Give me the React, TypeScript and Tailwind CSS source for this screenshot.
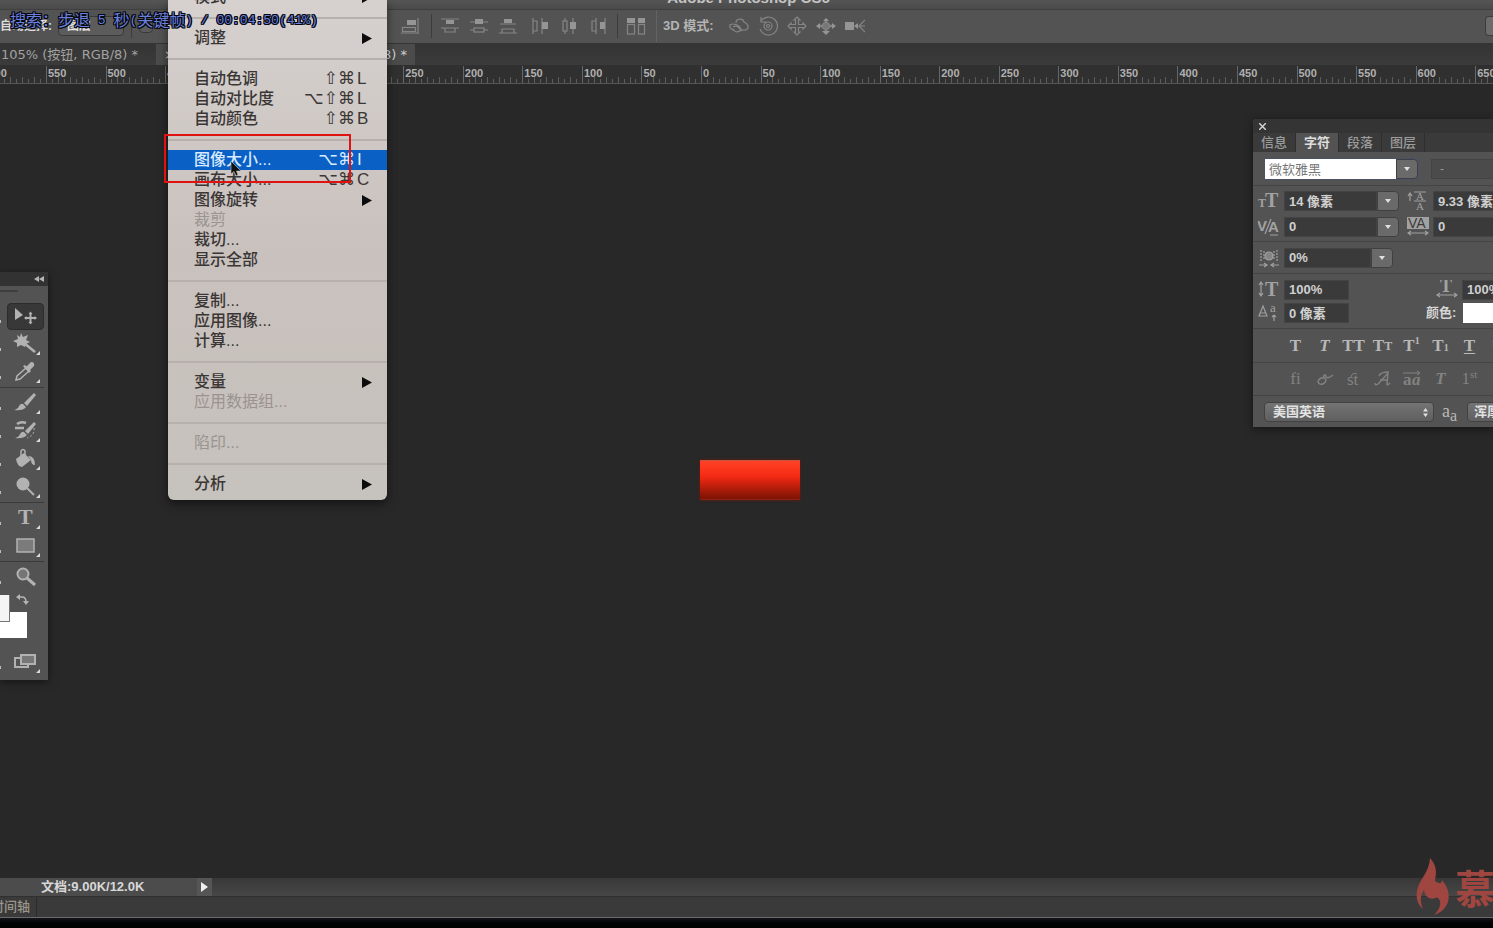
import React from "react";

const sans = "font-['Liberation_Sans','Noto_Sans_CJK_SC',sans-serif]";

type Item = { label: string; keys?: [string, string]; sub?: boolean; off?: boolean; on?: boolean };

const menuGroups: Item[][] = [
  [{ label: "模式", sub: true }],
  [{ label: "调整", sub: true }],
  [
    { label: "自动色调", keys: ["⇧⌘", "L"] },
    { label: "自动对比度", keys: ["⌥⇧⌘", "L"] },
    { label: "自动颜色", keys: ["⇧⌘", "B"] },
  ],
  [
    { label: "图像大小...", keys: ["⌥⌘", "I"], on: true },
    { label: "画布大小...", keys: ["⌥⌘", "C"] },
    { label: "图像旋转", sub: true },
    { label: "裁剪", off: true },
    { label: "裁切..." },
    { label: "显示全部" },
  ],
  [{ label: "复制..." }, { label: "应用图像..." }, { label: "计算..." }],
  [{ label: "变量", sub: true }, { label: "应用数据组...", off: true }],
  [{ label: "陷印...", off: true }],
  [{ label: "分析", sub: true }],
];

function Menu() {
  return (
    <div
      role="menu"
      aria-label="图像"
      className="absolute top-0 left-[168px] z-20 flex h-[500px] w-[219px] flex-col justify-end overflow-hidden rounded-b-md bg-linear-to-b from-[#d6d1cf] via-[#c9c1bd] to-[#c6c2bd] pb-1.5 shadow-[0_4px_10px_rgba(0,0,0,0.5)]"
    >
      {menuGroups.map((group, i) => (
        <div key={i} role="group" className="shrink-0">
          {i > 0 && (
            <div role="separator" className="flex h-[21px] items-center">
              <div className="h-0.5 w-full bg-[#b7b0ad]" />
            </div>
          )}
          {group.map((it) => (
            <button
              key={it.label}
              role="menuitem"
              disabled={it.off}
              className={`flex h-5 w-full items-center pr-[15px] pl-[26px] text-left text-base leading-5 ${
                it.on ? "bg-[#0b60c6] font-medium text-[#d9ecff]" : it.off ? "text-[#9a9390]" : "font-medium text-[#3a3635]"
              }`}
            >
              <span className="grow">{it.label}</span>
              {it.keys && (
                <span className="flex items-center font-['Liberation_Sans','DejaVu_Sans',sans-serif] text-[17px]">
                  <span>{it.keys[0]}</span>
                  <span className="w-[17px] pl-0.5">{it.keys[1]}</span>
                </span>
              )}
              {it.sub && (
                <svg width="10" height="11" viewBox="0 0 10 11" fill="#0c0c0c">
                  <path d="M0 0L10 5.5L0 11Z" />
                </svg>
              )}
            </button>
          ))}
        </div>
      ))}
    </div>
  );
}

function BarIcon({ label, children }: { label: string; children: React.ReactNode }) {
  return (
    <button aria-label={label} className="h-5 w-5 shrink-0">
      <svg width="20" height="20" viewBox="0 0 20 20" fill="none" stroke="#858585" strokeWidth="1.2">
        {children}
      </svg>
    </button>
  );
}

const f = { fill: "#959595", stroke: "none" };

function BarDivider() {
  return <div className="h-6 w-px shrink-0 bg-[#3c3c3c]" />;
}

function OptionsBar() {
  return (
    <div className="flex h-[34px] shrink-0 items-center border-t border-[#3f3f3f] bg-[#535353] pb-0.5">
      <div className="flex w-[400px] shrink-0 items-center">
        <label htmlFor="auto" className="w-[58px] overflow-hidden text-xs font-bold whitespace-nowrap text-[#dcdcdc]">
          自动选择:
        </label>
        <select
          id="auto"
          className="h-5 w-[66px] appearance-none rounded-sm border border-[#3a3a3a] bg-[#5c5c5c] pl-2 text-xs font-bold text-[#e0e0e0]"
        >
          <option>图层</option>
        </select>
        <div className="mx-[7px] h-6 w-px bg-[#3c3c3c]" />
        <input type="checkbox" aria-label="显示变换控件" className="h-3.5 w-3.5 appearance-none rounded-sm border border-[#3a3a3a] bg-[#5c5c5c]" />
      </div>
      <BarIcon label="右对齐">
        <path d="M18 2V18M1 17H18" />
        <rect x="7" y="4" width="9" height="5" {...f} />
        <rect x="2.5" y="11.5" width="13" height="4" />
      </BarIcon>
      <div className="w-[11px] shrink-0" />
      <BarDivider />
      <div className="flex gap-[9px] pl-2">
        <BarIcon label="按顶分布">
          <path d="M1 3H19M1 12H19M5 12V16H15V12" />
          <rect x="6" y="4" width="8" height="4" {...f} />
        </BarIcon>
        <BarIcon label="垂直居中分布">
          <path d="M1 6H19M1 14H5M15 14H19" />
          <rect x="6" y="3" width="8" height="5" {...f} />
          <rect x="5" y="12" width="10" height="4" />
        </BarIcon>
        <BarIcon label="按底分布">
          <path d="M2 8H18M1 17H19M4 17V13H16V17" />
          <rect x="6" y="3" width="8" height="4" {...f} />
        </BarIcon>
      </div>
      <div className="flex gap-[9px] pl-3">
        <BarIcon label="按左分布">
          <path d="M3 2V18M3 5H7V15H3M12 2V18" />
          <rect x="12" y="6" width="6" height="7" {...f} />
        </BarIcon>
        <BarIcon label="水平居中分布">
          <path d="M6 2V5M6 15V18M14 2V18" />
          <rect x="4" y="5" width="4" height="10" />
          <rect x="11" y="6" width="6" height="7" {...f} />
        </BarIcon>
        <BarIcon label="按右分布">
          <path d="M8 2V18M8 5H4V15H8M17 2V18" />
          <rect x="12" y="6" width="5" height="7" {...f} />
        </BarIcon>
      </div>
      <div className="w-[9px] shrink-0" />
      <BarDivider />
      <div className="w-2 shrink-0" />
      <BarIcon label="自动对齐图层">
        <rect x="1.5" y="8.5" width="7" height="9.5" />
        <rect x="12.5" y="8.5" width="6" height="9.5" />
        <rect x="1" y="2" width="8" height="5" {...f} />
        <rect x="12" y="2" width="7" height="5" {...f} />
      </BarIcon>
      <div className="w-2.5 shrink-0" />
      <div className="h-8 w-px shrink-0 bg-[#636363]" />
      <span className="w-[72px] shrink-0 pl-1.5 text-[13px] leading-5 font-bold whitespace-nowrap text-[#b4b4b4]">3D 模式:</span>
      <div className="flex gap-[9px]">
        <BarIcon label="旋转 3D 对象">
          <path d="M5 14C0 13 -1 8 4 8C7 8 9 9 11 11M7 7C7 2 14 2 15 6C21 9 20 14 15 14H12M9 11L13 15M4 11C7 9 12 11 12 14C9 17 5 16 4 13" />
        </BarIcon>
        <BarIcon label="滚动 3D 对象">
          <path d="M3 5A9 9 0 1 1 2 13M3 1V6H8" />
          <circle cx="10" cy="10" r="4" />
          <circle cx="10" cy="10" r="1.5" />
        </BarIcon>
        <BarIcon label="拖动 3D 对象">
          <path d="M10 1L13 4H11.500V8.500H16V7L19 10L16 13V11.500H11.500V16H13L10 19L7 16H8.500V11.500H4V13L1 10L4 7V8.500H8.500V4H7Z" />
        </BarIcon>
        <BarIcon label="滑动 3D 对象">
          <path d="M10 3V6M3 10H6M14 10H17M10 14V17" strokeWidth="2.500" />
          <path d="M7 5L10 2L13 5ZM0 10L4 7V13ZM20 10L16 7V13ZM6 15H14L10 19Z" {...f} />
          <circle cx="10" cy="10" r="3.500" fill="#777" />
        </BarIcon>
        <BarIcon label="缩放 3D 对象">
          <rect x="0" y="6" width="9" height="8" {...f} />
          <path d="M9 10L13 7V13Z" {...f} />
          <path d="M20 4L14 10L20 16M14 10H20" />
        </BarIcon>
      </div>
      <div className="grow" />
      <button aria-label="工作区" className="h-5 w-2 shrink-0 rounded-l-sm border border-r-0 border-[#3c3c3c] bg-[#6b6b6b]" />
    </div>
  );
}

function Ruler() {
  const origin = 701;
  const step = 59.55;
  const majors = Array.from({ length: 27 }, (_, i) => i - 12);
  return (
    <svg className="block h-[19px] w-full shrink-0 bg-[#303030]" aria-label="标尺">
      {majors.map((m) => {
        const x = origin + m * step;
        return (
          <g key={m}>
            <rect x={Math.round(x)} y="1" width="1" height="17" fill="#666666" />
            {Array.from({ length: 9 }, (_, k) => (
              <rect key={k} x={Math.round(x + ((k + 1) * step) / 10)} y={k % 2 ? 12 : 14} width="1" height={k % 2 ? 6 : 4} fill="#5c5c5c" />
            ))}
            <text x={x + 2} y="12" fill="#b0b0b0" fontSize="11" fontFamily="Liberation Sans, sans-serif" fontWeight="bold">
              {Math.abs(m) * 50}
            </text>
          </g>
        );
      })}
      <rect x="0" y="18" width="100%" height="1" fill="#555555" />
    </svg>
  );
}

function Tool({ label, active, corner = true, children }: { label: string; active?: boolean; corner?: boolean; children: React.ReactNode }) {
  return (
    <div className="flex h-7 items-center">
      <span className="mt-3 h-1 w-[7px]">
        <span className="block h-[3px] w-px bg-[#bdbdbd]" />
      </span>
      <button
        aria-label={label}
        className={`flex h-[27px] w-[37px] items-center justify-center rounded-sm ${active ? "border border-[#2c2c2c] bg-[#383838]" : ""}`}
      >
        <svg width="33" height="24" viewBox="0 0 33 24" fill="none" stroke="#b2b2b2" strokeWidth="1.5">
          {children}
          {corner && <path d="M31 19V23H27Z" fill="#dadada" stroke="none" />}
        </svg>
      </button>
    </div>
  );
}

function ToolDivider() {
  return <div className="my-px mr-1 h-px bg-[#3b3b3b]" />;
}

const g = { fill: "#b2b2b2", stroke: "none" };

function Toolbox() {
  return (
    <div className="absolute top-[188px] left-0 w-12 bg-[#535353] pb-1 shadow-[0_2px_8px_rgba(0,0,0,0.5)]">
      <div className="flex h-3.5 items-center justify-end bg-[#323232] pr-1">
        <svg width="10" height="6" viewBox="0 0 10 6" fill="#b5b5b5">
          <path d="M5 0V6L0 3ZM10 0V6L5 3Z" />
        </svg>
      </div>
      <div className="h-4 pt-1">
        <div className="h-0.5 w-[18px] bg-[#3e3e3e]" />
      </div>
      <Tool label="移动工具" active corner={false}>
        <path d="M6 4V16L14 11Z" {...g} />
        <path d="M21.500 9V19M16.500 14H26.500" strokeWidth="2" />
        <path d="M19.500 10L21.500 7.500L23.500 10ZM19.500 18L21.500 20.500L23.500 18ZM17.500 12L15 14L17.500 16ZM25.500 12L28 14L25.500 16Z" {...g} />
      </Tool>
      <Tool label="魔棒工具">
        <path d="M12 1L14 5L19 3L17 8L21 10L17 12L16 15L12 13L8 15L8 11L4 9L9 7L8 3L11 5Z" {...g} />
        <path d="M15 11L26 20" strokeWidth="2.500" />
      </Tool>
      <Tool label="吸管工具">
        <path d="M7 20L8 16L17 8L20 11L11 19Z" />
        <path d="M14 6L16 5L22 11L20 13ZM17 7L22 2Q26 2 25 6L21 10Z" {...g} />
      </Tool>
      <ToolDivider />
      <Tool label="画笔工具">
        <path d="M25 2L27 4L18 15L15 12Z" {...g} />
        <path d="M14 13L17 16Q14 20 5 19Q9 18 10 15Q12 12 14 13Z" {...g} />
      </Tool>
      <Tool label="历史记录画笔工具">
        <path d="M25 3L27 5L19 15L16 12Z" {...g} />
        <path d="M15 13L18 16Q14 20 6 19Q10 18 11 15Q13 12 15 13Z" {...g} />
        <path d="M8 5Q12 2 17 4M6 9H15" strokeWidth="2.500" />
        <path d="M25 9Q26 16 18 19" strokeDasharray="2 2" strokeWidth="1" />
      </Tool>
      <Tool label="油漆桶工具">
        <path d="M7 12L15 6L22 13L13 20Q8 19 7 12Z" {...g} />
        <path d="M12 12V4Q14 1 16 4V8" />
        <path d="M19 9Q26 9 26 18Q22 18 22 13Z" {...g} />
      </Tool>
      <Tool label="减淡工具">
        <circle cx="14" cy="9" r="6.5" {...g} />
        <path d="M18 13L25 20" strokeWidth="2" />
      </Tool>
      <ToolDivider />
      <Tool label="文字工具">
        <text x="9" y="18" {...g} fontSize="22" fontFamily="Liberation Serif, serif" fontWeight="bold">
          T
        </text>
      </Tool>
      <Tool label="矩形工具">
        <rect x="8" y="5" width="17" height="13" fill="#7b7b7b" />
      </Tool>
      <ToolDivider />
      <Tool label="缩放工具" corner={false}>
        <circle cx="14" cy="9" r="5.500" fill="#757575" strokeWidth="2" />
        <path d="M18 13L26 20" strokeWidth="3" />
      </Tool>
      <div className="relative h-[57px]">
        <button aria-label="背景色" className="absolute top-[21px] left-0 h-[26px] w-[27px] bg-white" />
        <button aria-label="前景色" className="absolute top-1 left-0 h-[27px] w-2.5 border-r border-b border-[#777] bg-[#f4f4f4]" />
        <button aria-label="切换颜色" className="absolute top-0.5 left-4 h-3 w-3.5">
          <svg width="14" height="12" viewBox="0 0 14 12" fill="none" stroke="#b5b5b5" strokeWidth="1.500">
            <path d="M3 4H6Q10 4 10 9" />
            <path d="M4 1V7L0 4ZM7 8H13L10 12Z" fill="#b5b5b5" stroke="none" />
          </svg>
        </button>
      </div>
      <Tool label="屏幕模式">
        <rect x="6" y="8" width="13" height="9" strokeWidth="2" />
        <rect x="12" y="5" width="14" height="9" fill="#777" strokeWidth="2" />
      </Tool>
    </div>
  );
}

function Glyph({ children }: { children: React.ReactNode }) {
  return (
    <svg className="mr-1 shrink-0" width="22" height="20" viewBox="0 0 22 20" fill="none" stroke="#a0a0a0" strokeWidth="1.200" fontFamily="Liberation Serif, serif">
      {children}
    </svg>
  );
}

const t = { fill: "#a2a2a2", stroke: "none" };

function DropButton({ label }: { label: string }) {
  return (
    <button aria-label={`${label}选项`} className="flex h-5 w-[22px] shrink-0 items-center justify-center rounded-r-sm border border-[#404040] bg-[#6a6a6a]">
      <svg width="6" height="4" viewBox="0 0 6 4" fill="#e0e0e0">
        <path d="M0 0H6L3 4Z" />
      </svg>
    </button>
  );
}

function Field({ label, value, width, drop }: { label: string; value: string; width: string; drop?: boolean }) {
  return (
    <div className="flex h-5 shrink-0">
      <input
        aria-label={label}
        defaultValue={value}
        className={`${width} h-5 shrink-0 border border-[#444] bg-[#3a3a3a] px-1 text-[13px] font-bold text-[#d0d0d0]`}
      />
      {drop && <DropButton label={label} />}
    </div>
  );
}

const rule = "border-b border-[#444444]";

function CharacterPanel() {
  const styleCell = "flex h-5 w-[29px] shrink-0 items-center justify-center font-['Liberation_Serif',serif] text-[17px] leading-5 whitespace-nowrap";
  return (
    <section aria-label="字符" className="absolute top-[35px] right-0 w-60 overflow-hidden rounded-tl bg-[#535353] shadow-[0_2px_8px_rgba(0,0,0,0.5)]">
      <div className="flex h-3.5 items-center bg-[#343434] pl-1.5">
        <button aria-label="关闭">
          <svg width="7" height="7" viewBox="0 0 7 7" stroke="#d0d0d0" strokeWidth="1.500">
            <path d="M0 0L7 7M7 0L0 7" />
          </svg>
        </button>
      </div>
      <div role="tablist" className="flex h-[19px] bg-[#3a3a3a] text-[13px] leading-5">
        {["信息", "字符", "段落", "图层"].map((n) => (
          <button
            key={n}
            role="tab"
            aria-selected={n === "字符"}
            className={`w-[43px] border-r border-[#2e2e2e] ${n === "字符" ? "bg-[#535353] font-bold text-[#dddddd]" : "font-medium text-[#9c9c9c]"}`}
          >
            {n}
          </button>
        ))}
      </div>
      <div className={`flex h-[34px] items-center pl-[11px] ${rule}`}>
        <div className="flex shrink-0 border border-[#4c5068]">
          <input aria-label="字体" defaultValue="微软雅黑" className="h-5 w-[131px] shrink-0 bg-white px-1 text-[13px] text-[#777777]" />
          <DropButton label="字体" />
        </div>
        <input aria-label="字体样式" defaultValue="-" className="ml-3 h-5 w-24 shrink-0 border border-[#444] bg-[#4b4b4b] px-2 text-xs text-[#999]" />
      </div>
      <div className={`flex h-14 flex-col justify-center gap-1.5 ${rule}`}>
        <div className="flex items-center pl-[5px]">
          <Glyph>
            <text x="0" y="16" fontSize="12" fontWeight="bold" {...t}>T</text>
            <text x="7" y="16" fontSize="20" fontWeight="bold" {...t}>T</text>
          </Glyph>
          <Field label="字体大小" value="14 像素" width="w-[93px]" drop />
          <div className="w-2 shrink-0" />
          <Glyph>
            <path d="M3 3V10M1 5L3 2L5 5M7 1H19M7 10H19" />
            <text x="9" y="9" fontSize="11" {...t}>A</text>
            <text x="9" y="19" fontSize="11" {...t}>A</text>
          </Glyph>
          <Field label="行距" value="9.33 像素" width="w-20" />
        </div>
        <div className="flex items-center pl-[5px]">
          <Glyph>
            <text x="-1" y="14" fontSize="15" fontFamily="Liberation Sans" fontWeight="bold" {...t}>V</text>
            <text x="10" y="15" fontSize="15" fontFamily="Liberation Sans" fontWeight="bold" {...t}>A</text>
            <path d="M13 2L7 17M12 18H20" />
          </Glyph>
          <Field label="字距微调" value="0" width="w-[93px]" drop />
          <div className="w-2 shrink-0" />
          <Glyph>
            <rect x="0" y="0" width="22" height="12" {...t} />
            <text x="1" y="11" fontSize="14" fontFamily="Liberation Sans" fill="#3c3c3c" stroke="none">VA</text>
            <path d="M1 16H21M4 14L1 16L4 18M18 14L21 16L18 18" />
          </Glyph>
          <Field label="字距" value="0" width="w-20" />
        </div>
      </div>
      <div className={`flex h-8 items-center pl-[5px] ${rule}`}>
        <Glyph>
          <path d="M3 2V13M19 2V13M6 3V12M16 3V12" strokeDasharray="2 1" />
          <circle cx="11" cy="8" r="4" fill="#858585" />
          <path d="M1 17H9M13 17H21M6 15L9 17L6 19M16 15L13 17L16 19" />
        </Glyph>
        <Field label="比例间距" value="0%" width="w-[87px]" drop />
      </div>
      <div className={`flex h-[55px] flex-col justify-center gap-[3px] ${rule}`}>
        <div className="flex items-center pl-[5px]">
          <Glyph>
            <path d="M3 3V15M1 5L3 2L5 5M1 13L3 16L5 13" />
            <text x="7" y="16" fontSize="20" fontWeight="bold" {...t}>T</text>
          </Glyph>
          <Field label="垂直缩放" value="100%" width="w-[65px]" />
          <div className="w-[87px] shrink-0" />
          <Glyph>
            <text x="4" y="12" fontSize="18" fontWeight="bold" {...t}>T</text>
            <path d="M1 15H21M4 13L1 15L4 17M18 13L21 15L18 17" />
          </Glyph>
          <Field label="水平缩放" value="100%" width="w-16" />
        </div>
        <div className="flex items-center pl-[5px]">
          <Glyph>
            <path d="M1 13L5 3L9 13ZM2 10H8M16 12V18M14 14L16 12L18 14" />
            <text x="12" y="9" fontSize="13" {...t}>a</text>
          </Glyph>
          <Field label="基线偏移" value="0 像素" width="w-[65px]" />
          <span className="ml-[77px] w-[37px] shrink-0 text-[13px] leading-5 font-bold whitespace-nowrap text-[#d5d5d5]">颜色:</span>
          <button aria-label="颜色" className="h-5 w-16 shrink-0 bg-white" />
        </div>
      </div>
      <div className={`flex h-[34px] items-center pl-7 text-[#b8b8b8] ${rule}`}>
        <button className={`${styleCell} font-bold`}>T</button>
        <button className={`${styleCell} font-bold italic`}>T</button>
        <button className={`${styleCell} font-bold`}>TT</button>
        <button className={`${styleCell} font-bold`}>T<span className="text-xs">T</span></button>
        <button className={`${styleCell} font-bold`}>T<sup className="text-[10px]">1</sup></button>
        <button className={`${styleCell} font-bold`}>T<sub className="text-[10px]">1</sub></button>
        <button className={`${styleCell} font-bold underline underline-offset-2`}>T</button>
        <button className={`${styleCell} font-bold line-through`}>T</button>
      </div>
      <div className={`flex h-[33px] items-center pl-7 text-[#828282] ${rule}`}>
        <button className={styleCell}>fi</button>
        <button className={styleCell} aria-label="上下文替代字">
          <svg width="18" height="12" viewBox="0 0 18 12" fill="none" stroke="#828282" strokeWidth="1.5">
            <ellipse cx="6" cy="8" rx="4" ry="3" transform="rotate(-25 6 8)" />
            <path d="M8 5C7 1 10 1 10 4Q12 6 17 2" />
          </svg>
        </button>
        <button className={styleCell} aria-label="自由连字">
          <svg width="16" height="16" viewBox="0 0 16 16" fill="#828282" fontFamily="Liberation Serif, serif" fontSize="17">
            <text x="1" y="14">st</text>
            <path d="M5 6Q6 1 11 3" fill="none" stroke="#828282" />
          </svg>
        </button>
        <button className={styleCell} aria-label="花饰字">
          <svg width="18" height="16" viewBox="0 0 18 16" fill="none" stroke="#828282" strokeWidth="1.4">
            <path d="M1 12Q1 15 4 13Q8 9 14 2L13 13Q13 15 16 12M6 9H14M5 5Q6 1 15 1" />
          </svg>
        </button>
        <button className={styleCell} aria-label="文体替代字">
          <svg width="20" height="18" viewBox="0 0 20 18" fill="#828282" fontFamily="Liberation Serif, serif" fontSize="17" fontWeight="bold">
            <text x="1" y="15">a</text>
            <text x="10" y="15" fontStyle="italic">a</text>
            <path d="M1 3H18M15 1L18 3L15 5" fill="none" stroke="#828282" />
          </svg>
        </button>
        <button className={`${styleCell} font-bold italic`}>T</button>
        <button className={styleCell}>1<sup className="text-[11px]">st</sup></button>
        <button className={styleCell}>½</button>
      </div>
      <div className="flex h-[31px] items-center pl-[11px]">
        <div className="relative shrink-0">
          <select
            aria-label="语言"
            className="block h-5 w-[170px] appearance-none rounded-sm border border-[#424242] bg-linear-to-b from-[#747474] to-[#5f5f5f] pl-2 text-[13px] leading-4 font-bold text-[#e2e2e2]"
          >
            <option>美国英语</option>
          </select>
          <svg className="pointer-events-none absolute top-1.5 right-1.5" width="5" height="9" viewBox="0 0 5 9" fill="#e0e0e0">
            <path d="M0 3.500L2.500 0L5 3.500ZM0 5.500H5L2.500 9Z" />
          </svg>
        </div>
        <span className="w-[33px] shrink-0 pl-2 font-['Liberation_Serif',serif] text-lg leading-5 text-[#b8b8b8]">
          a<sub className="text-base">a</sub>
        </span>
        <select
          aria-label="消除锯齿"
          className="h-5 w-20 shrink-0 appearance-none rounded-sm border border-[#424242] bg-linear-to-b from-[#747474] to-[#5f5f5f] pl-1.5 text-[13px] leading-4 font-bold text-[#e2e2e2]"
        >
          <option>浑厚</option>
        </select>
      </div>
    </section>
  );
}

export default function App() {
  return (
    <div className={`relative flex h-screen flex-col overflow-hidden bg-[#282828] ${sans}`}>
      <header className="flex h-[9px] shrink-0 items-end justify-center overflow-hidden bg-linear-to-b from-[#555] to-[#4a4a4a] pl-1">
        <h1 className="text-[15px] leading-[22px] font-bold text-[#c4c4c4]">Adobe Photoshop CS6</h1>
      </header>
      <OptionsBar />
      <div role="tablist" className="flex h-[22px] shrink-0 bg-linear-to-b from-[#343434] to-[#3b3b3b] pt-px font-['DejaVu_Sans','Noto_Sans_CJK_SC',sans-serif] text-[13px]">
        <button role="tab" className="w-[156px] pl-px text-left whitespace-nowrap text-[#a2a2a2]">
          105% (按钮, RGB/8) *
        </button>
        <button role="tab" aria-selected="true" className="flex w-[259px] items-center justify-between bg-[#4b4b4b] pr-2 pl-2 text-[#d0d0d0]">
          <span>×</span>
          <span>RGB/8) *</span>
        </button>
      </div>
      <Ruler />

      <main className="relative min-h-0 grow">
        <div className="absolute top-[376px] left-[700px] h-10 w-[100px] border-t border-b border-t-[#c4533f] border-b-[#8c2214] bg-linear-to-b from-[#ff4226] via-[#f52a14] via-40% to-[#7c1204] shadow-[0_0_3px_#6b1a10]" />
        <Toolbox />
        <CharacterPanel />
      </main>

      <div className="flex h-[18px] shrink-0 bg-linear-to-b from-[#383838] to-[#474747]">
        <div className="w-[197px] bg-[#4c4c4c] pl-[41px] text-[13px] leading-[18px] font-bold whitespace-nowrap text-[#d8d8d8]">文档:9.00K/12.0K</div>
        <button aria-label="状态选项" className="flex w-[15px] items-center justify-center bg-[#555555]">
          <svg width="7" height="10" viewBox="0 0 7 10" fill="#f0f0f0">
            <path d="M0 0L7 5L0 10Z" />
          </svg>
        </button>
      </div>
      <div className="flex h-[22px] shrink-0 border-t border-b border-t-[#303030] border-b-[#6a6a6a] bg-[#3a3a3a]">
        <button className="flex w-[37px] items-center justify-end border-r border-[#2c2c2c] pr-1.5 text-[13px] font-medium whitespace-nowrap text-[#9b968c]">时间轴</button>
      </div>
      <footer className="h-2.5 shrink-0 bg-linear-to-b from-[#14161b] to-black" />

      <Menu />
      <div className="pointer-events-none absolute top-[134px] left-[164px] z-30 h-[49px] w-[187px] border-2 border-[#e01212]" />
      <svg className="absolute top-[161px] left-[230px] z-30" width="12" height="16" viewBox="0 0 12 16">
        <path d="M1 0V13L4 10.500L6 15L8 14L6.500 10H11Z" fill="#111" stroke="#c8c8c8" strokeWidth="0.600" />
      </svg>
      <p className="absolute top-2.5 left-2.5 z-30 flex text-base leading-[22px] whitespace-pre text-[#6a80dc] [text-shadow:1px_0_#05070f,-1px_0_#05070f,0_1px_#05070f,0_-1px_#05070f,1px_1px_#05070f,-1px_-1px_#05070f,1px_-1px_#05070f,-1px_1px_#05070f]">
        <span>搜索：步退</span>
        <span className="font-['Liberation_Mono',monospace] text-[13px]"> 5 </span>
        <span>秒</span>
        <span className="font-['Liberation_Mono',monospace] text-[13px]">(</span>
        <span>关键帧</span>
        <span className="font-['Liberation_Mono',monospace] text-[13px]">) / 00:04:50(41%)</span>
      </p>
      <div className="pointer-events-none absolute right-0 bottom-3 z-30 flex w-[78px] items-center overflow-hidden text-[#a04640]">
        <svg className="shrink-0" width="36" height="58" viewBox="0 0 36 58" fill="#a04640">
          <path d="M15 0C23 9 21 16 20 23C24 26 27 26 27 22C34 30 36 41 31 48C28 53 24 55 19 57C24 52 26 47 25 43Q23 38 20 40C15 42 10 39 9 32C5 38 5 43 8 51C2 46 0 38 3 29C6 20 14 14 15 0Z" />
        </svg>
        <span className="ml-1 pt-1.5 text-[40px] leading-10 font-bold">慕</span>
      </div>
    </div>
  );
}
